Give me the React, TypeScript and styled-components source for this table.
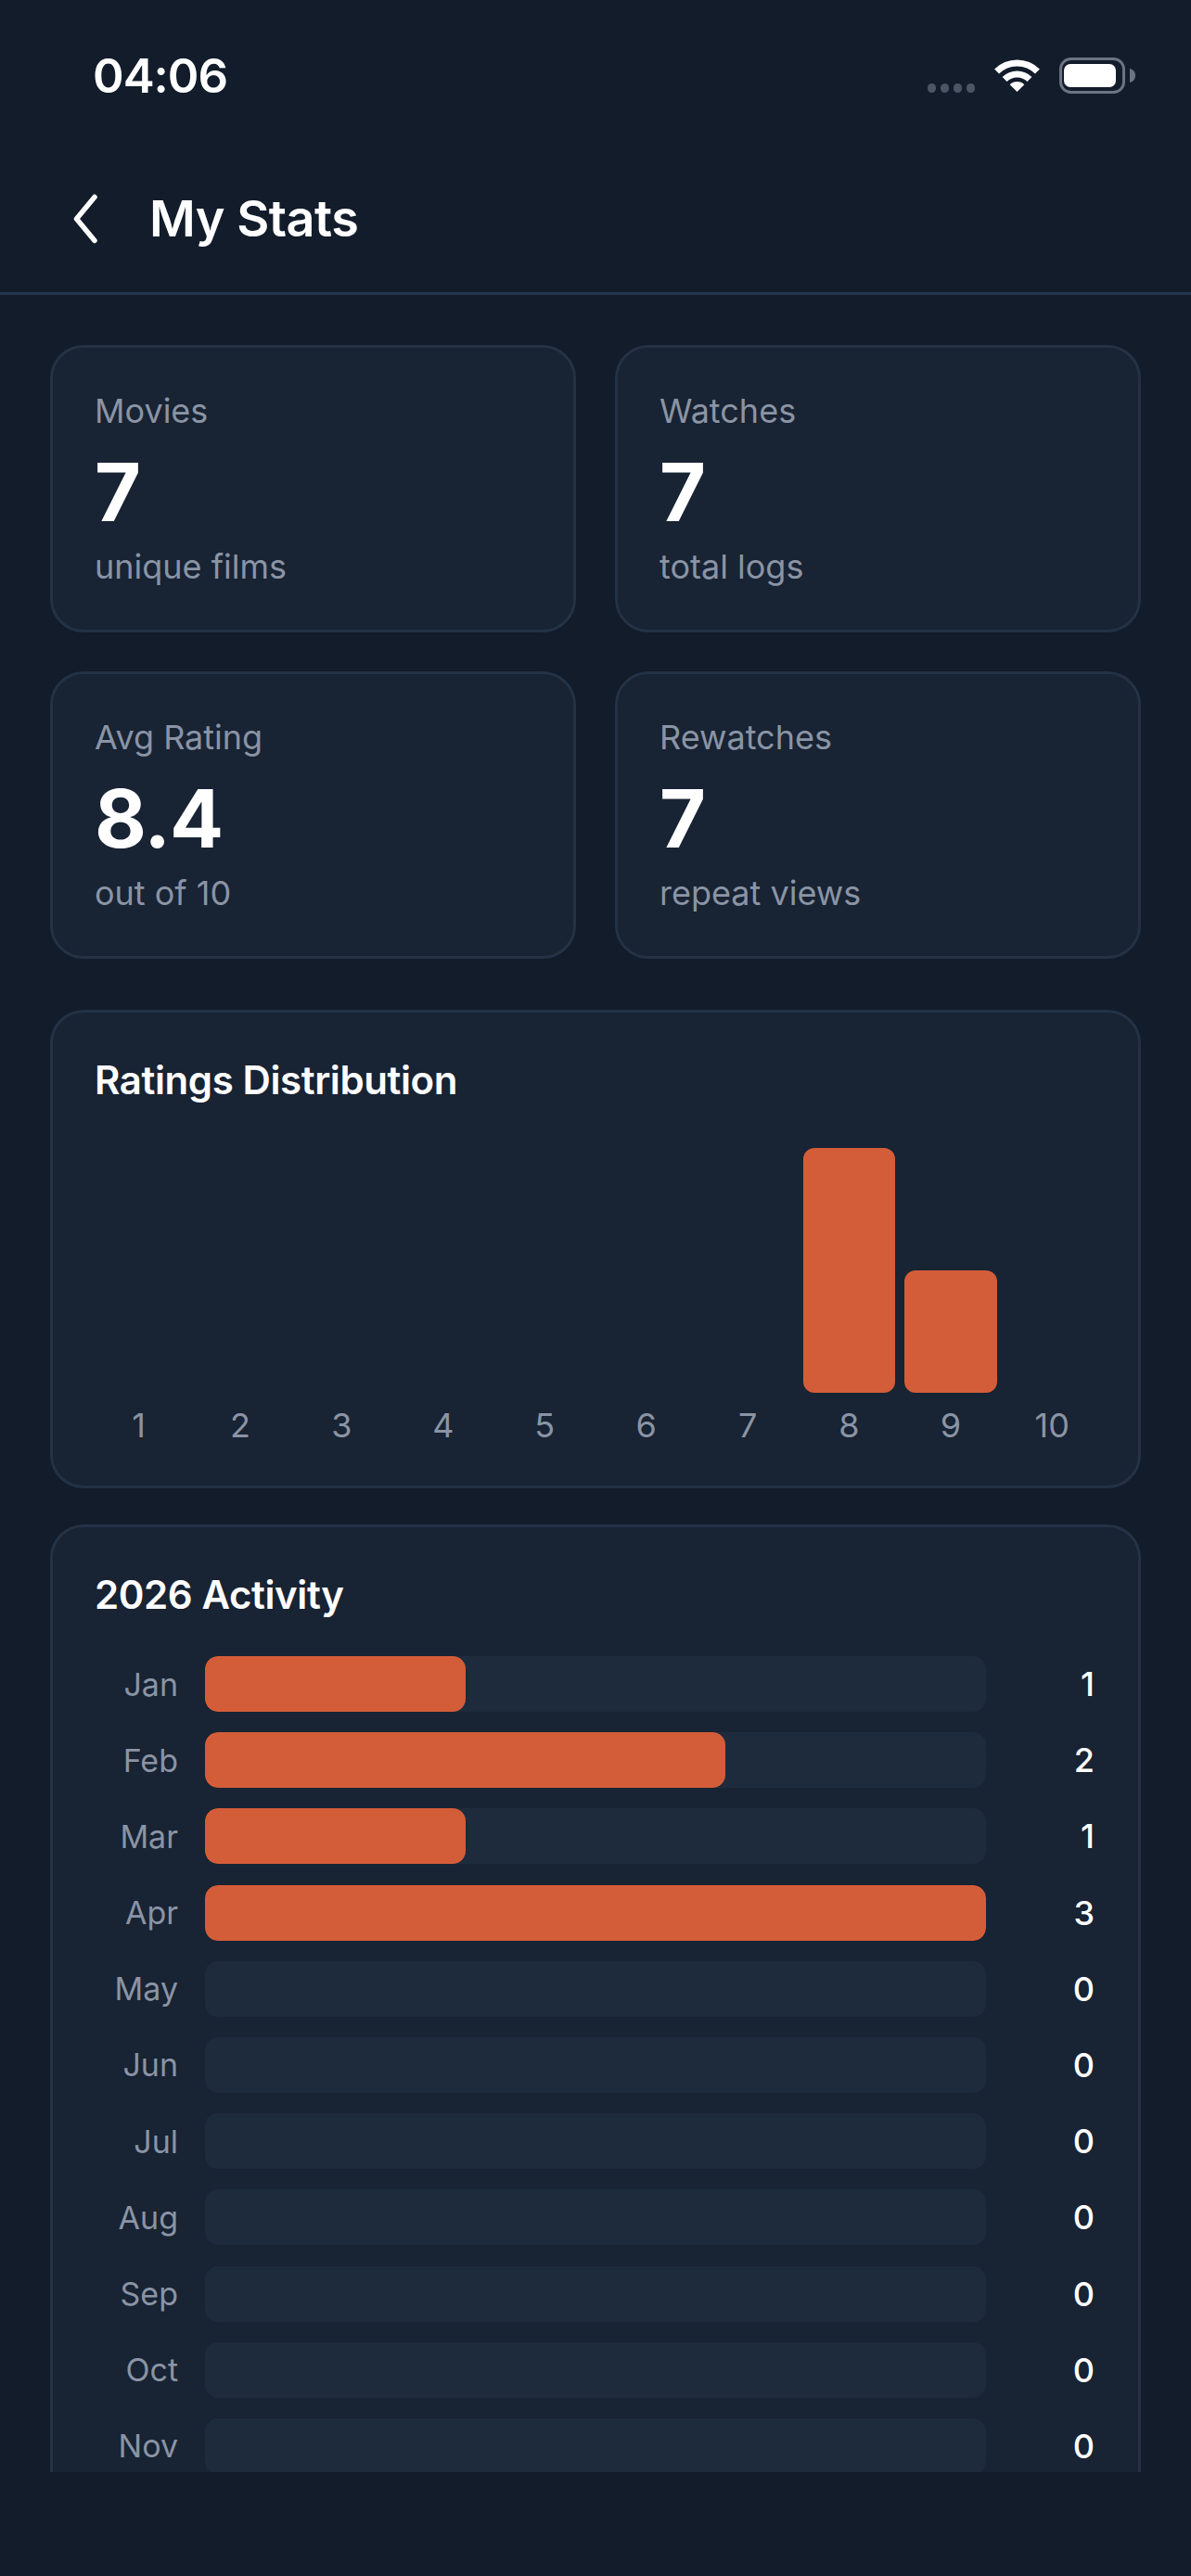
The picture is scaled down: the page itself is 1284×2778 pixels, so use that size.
import styled, { createGlobalStyle } from 'styled-components';

const GlobalStyle = createGlobalStyle`
    html, body {
        margin: 0;
        padding: 0;
        background: #121c2b;
    }
    body {
        font-family: Inter, 'Noto Sans', 'Liberation Sans', sans-serif;
        -webkit-font-smoothing: antialiased;
    }
`;

const color = {
    page: '#121c2b',
    card: '#182333',
    border: '#243245',
    track: '#1e2b3c',
    accent: '#d45d39',
    muted: '#8a94a5',
    white: '#ffffff',
};

const Page = styled.div`
    display: flex;
    flex-direction: column;
    width: 1284px;
    height: 2778px;
    overflow: hidden;
    background: ${color.page};
    color: ${color.white};
`;

const StatusBar = styled.div`
    display: flex;
    align-items: center;
    justify-content: space-between;
    height: 162px;
    padding: 0 60px 0 100px;
    box-sizing: border-box;
    flex-shrink: 0;
`;

const Clock = styled.span`
    font-size: 51px;
    font-weight: 600;
    letter-spacing: -1px;
`;

const StatusIcons = styled.div`
    display: flex;
    align-items: center;
    gap: 19px;
`;

const SignalDots = styled.div`
    display: flex;
    gap: 5px;
    margin-top: 28px;
`;

const Dot = styled.span`
    width: 9px;
    height: 10px;
    border-radius: 5px;
    background: #4b5565;
`;

const Header = styled.header`
    display: flex;
    align-items: center;
    gap: 51px;
    height: 156px;
    padding: 0 0 6px 74px;
    box-sizing: border-box;
    border-bottom: 3px solid #26364a;
    flex-shrink: 0;
`;

const BackButton = styled.button`
    display: flex;
    padding: 0;
    border: none;
    background: none;
    cursor: pointer;
`;

const Title = styled.h1`
    margin: 0;
    font-size: 54px;
    font-weight: 600;
    letter-spacing: -0.5px;
`;

const Scroll = styled.main`
    height: 2348px;
    overflow: hidden;
    padding: 54px 54px 0;
    box-sizing: border-box;
    flex-shrink: 0;
`;

const StatGrid = styled.div`
    display: grid;
    grid-template-columns: 1fr 1fr;
    gap: 42px;
`;

const Card = styled.section<{ $space?: number }>`
    background: ${color.card};
    border: 3px solid ${color.border};
    border-radius: 36px;
    margin-top: ${p => p.$space ?? 0}px;
`;

const StatCard = styled(Card)`
    height: 310px;
    box-sizing: border-box;
    padding: 46px 45px 0;
`;

const StatLabel = styled.div`
    font-size: 36px;
    line-height: 44px;
    color: ${color.muted};
`;

const StatValue = styled.div`
    margin-top: 18px;
    font-size: 86px;
    line-height: 96px;
    font-weight: 700;
    letter-spacing: -1px;
`;

const StatSub = styled.div`
    margin-top: 10px;
    font-size: 36px;
    line-height: 44px;
    color: ${color.muted};
`;

const ChartCard = styled(Card)`
    padding: 48px 43px 43px;
`;

const CardTitle = styled.h2`
    margin: 0;
    padding-left: 2px;
    font-size: 42px;
    line-height: 50px;
    font-weight: 600;
    letter-spacing: -0.4px;
`;

const Histogram = styled.div`
    display: grid;
    grid-template-columns: repeat(10, 1fr);
    column-gap: 10px;
    margin-top: 48px;
`;

const HistColumn = styled.div`
    display: flex;
    flex-direction: column;
    align-items: stretch;
`;

const BarSlot = styled.div`
    display: flex;
    align-items: flex-end;
    height: 264px;
`;

const Bar = styled.div`
    width: 100%;
    background: ${color.accent};
    border-radius: 12px;
`;

const TickLabel = styled.div`
    margin-top: 13px;
    font-size: 36px;
    line-height: 44px;
    text-align: center;
    color: ${color.muted};
`;

const ActivityList = styled.div`
    display: flex;
    flex-direction: column;
    gap: 22.2px;
    margin-top: 41px;
`;

const MonthRow = styled.div`
    display: grid;
    grid-template-columns: 92px 1fr 92px;
    column-gap: 29px;
    align-items: center;
    height: 60px;
`;

const MonthName = styled.span`
    font-size: 34px;
    text-align: right;
    color: ${color.muted};
`;

const Track = styled.div`
    height: 60px;
    border-radius: 14px;
    background: ${color.track};
    overflow: hidden;
`;

const Fill = styled.div`
    height: 100%;
    border-radius: 14px;
    background: ${color.accent};
`;

const Count = styled.span`
    font-size: 36px;
    font-weight: 500;
    text-align: right;
    padding-right: 4px;
`;

const BottomInset = styled.div`
    flex: 1;
`;

const stats = [
    { label: 'Movies', value: '7', sub: 'unique films' },
    { label: 'Watches', value: '7', sub: 'total logs' },
    { label: 'Avg Rating', value: '8.4', sub: 'out of 10' },
    { label: 'Rewatches', value: '7', sub: 'repeat views' },
];

const ratings: Record<number, number> = { 8: 2, 9: 1 };

const months = [
    ['Jan', 1], ['Feb', 2], ['Mar', 1], ['Apr', 3], ['May', 0], ['Jun', 0],
    ['Jul', 0], ['Aug', 0], ['Sep', 0], ['Oct', 0], ['Nov', 0], ['Dec', 0],
] as const;

const WifiIcon = () => (
    <svg width="53" height="38" viewBox="0 0 53 38" fill="none">
        <path d="M4.6 15.1 A31 31 0 0 1 48.4 15.1" stroke="#fff" strokeWidth="7" />
        <path d="M13.1 23.6 A19 19 0 0 1 39.9 23.6" stroke="#fff" strokeWidth="7" />
        <path d="M26.5 37 L18.7 29.2 A11 11 0 0 1 34.3 29.2 Z" fill="#fff" />
    </svg>
);

const BatteryIcon = () => (
    <svg width="82" height="39" viewBox="0 0 82 39" fill="none">
        <rect x="1.5" y="1.5" width="68" height="36" rx="11" stroke="#6b7482" strokeWidth="3" />
        <rect x="5" y="7" width="56" height="25" rx="7" fill="#fff" />
        <path d="M76 12 C80 13 82 16 82 19.5 C82 23 80 26 76 27 Z" fill="#6b7482" />
    </svg>
);

const ChevronLeft = () => (
    <svg width="36" height="54" viewBox="0 0 36 54" fill="none">
        <path d="M28 3.5 L8.5 27 L28 50.5" stroke="#fff" strokeWidth="5.5" strokeLinecap="round" strokeLinejoin="round" />
    </svg>
);

const App = () => {
    const maxRating = Math.max(...Object.values(ratings));
    const maxMonth = Math.max(...months.map(([, n]) => n));

    return (
        <Page>
            <GlobalStyle />
            <StatusBar>
                <Clock>04:06</Clock>
                <StatusIcons>
                    <SignalDots>
                        <Dot />
                        <Dot />
                        <Dot />
                        <Dot />
                    </SignalDots>
                    <WifiIcon />
                    <BatteryIcon />
                </StatusIcons>
            </StatusBar>

            <Header>
                <BackButton aria-label="Back">
                    <ChevronLeft />
                </BackButton>
                <Title>My Stats</Title>
            </Header>

            <Scroll>
                <StatGrid>
                    {stats.map(stat => (
                        <StatCard key={stat.label}>
                            <StatLabel>{stat.label}</StatLabel>
                            <StatValue>{stat.value}</StatValue>
                            <StatSub>{stat.sub}</StatSub>
                        </StatCard>
                    ))}
                </StatGrid>

                <ChartCard $space={55}>
                    <CardTitle>Ratings Distribution</CardTitle>
                    <Histogram>
                        {Array.from({ length: 10 }, (_, i) => i + 1).map(score => (
                            <HistColumn key={score}>
                                <BarSlot>
                                    {ratings[score] ? <Bar style={{ height: `${(ratings[score] / maxRating) * 100}%` }} /> : null}
                                </BarSlot>
                                <TickLabel>{score}</TickLabel>
                            </HistColumn>
                        ))}
                    </Histogram>
                </ChartCard>

                <ChartCard $space={39}>
                    <CardTitle>2026 Activity</CardTitle>
                    <ActivityList>
                        {months.map(([name, count]) => (
                            <MonthRow key={name}>
                                <MonthName>{name}</MonthName>
                                <Track>
                                    {count > 0 && <Fill style={{ width: `${(count / maxMonth) * 100}%` }} />}
                                </Track>
                                <Count>{count}</Count>
                            </MonthRow>
                        ))}
                    </ActivityList>
                </ChartCard>
            </Scroll>

            <BottomInset />
        </Page>
    );
};

export default App;
